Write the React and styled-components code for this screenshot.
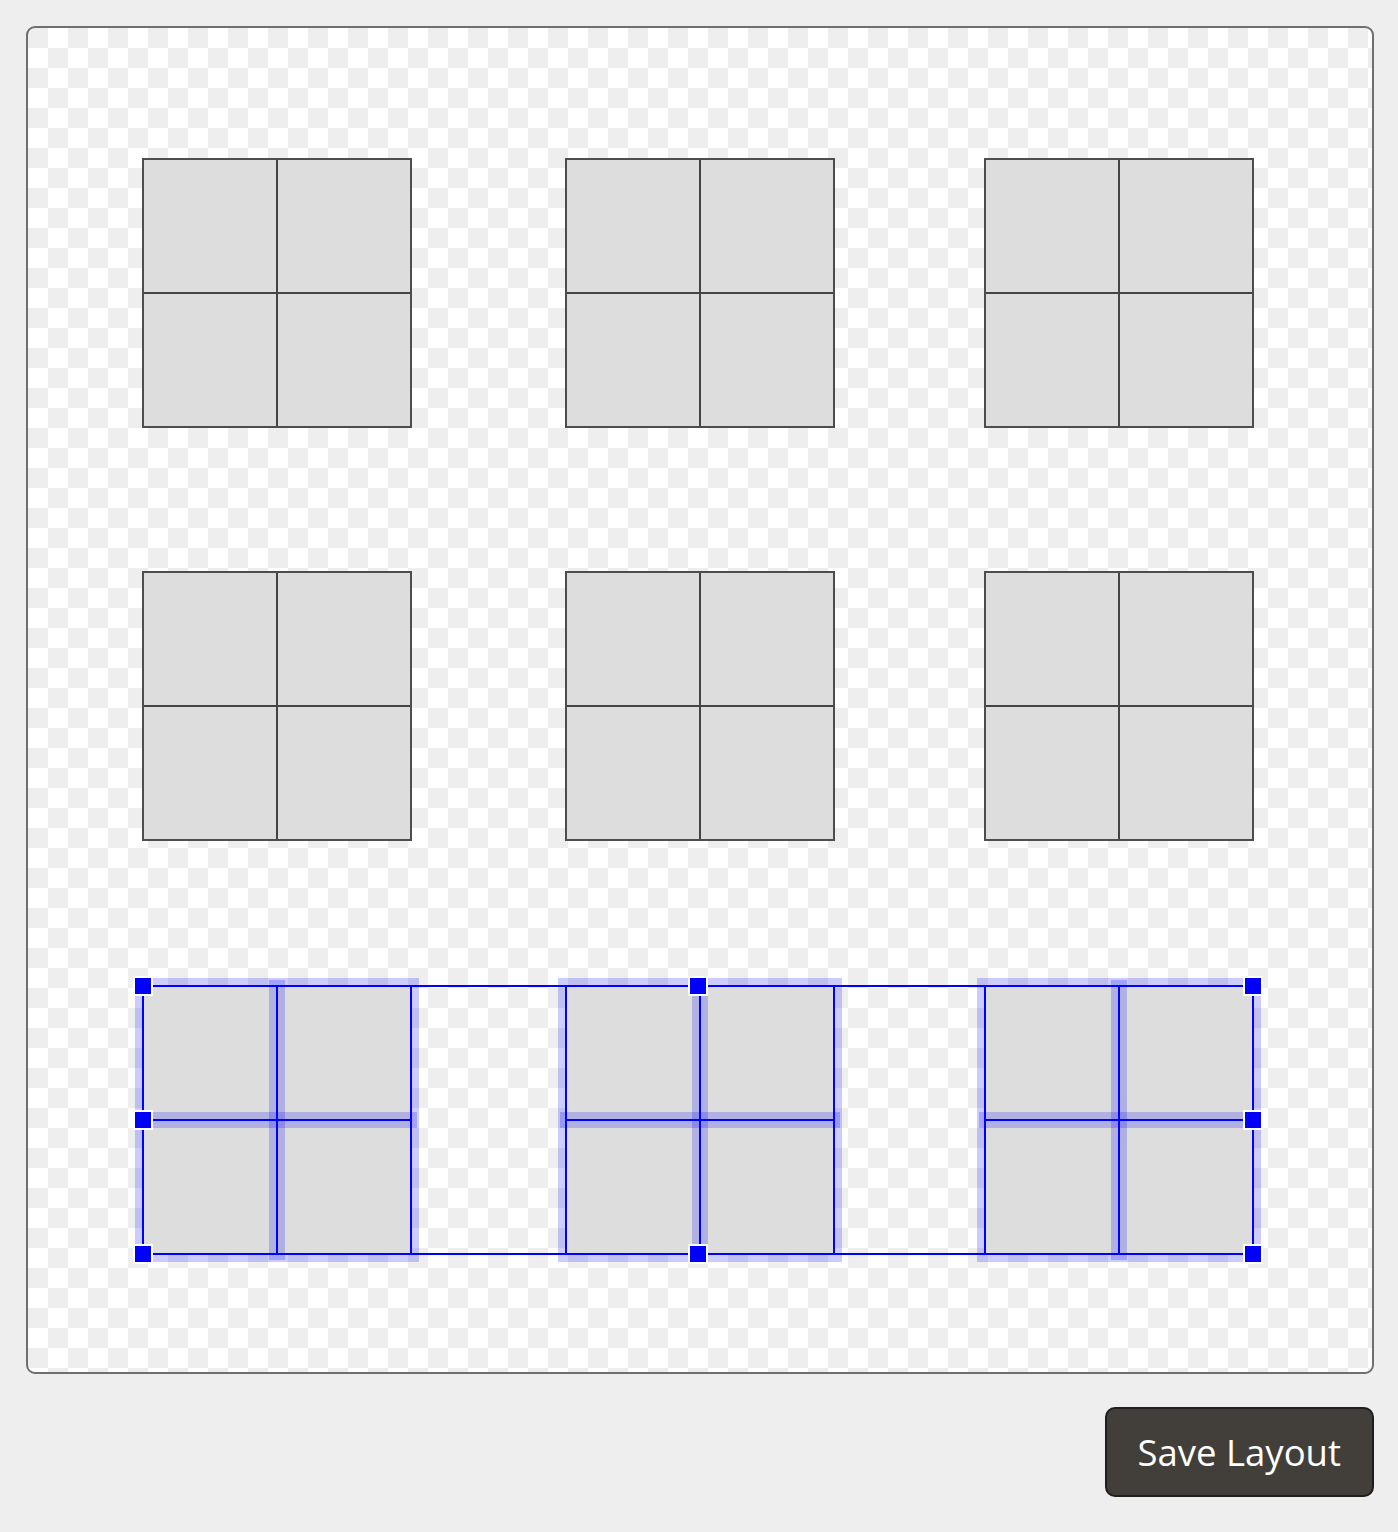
import React from 'react'
import styled, { createGlobalStyle, css } from 'styled-components'

const Global = createGlobalStyle`
  html, body { margin: 0; padding: 0; background: #eeeeee; }
  body { font-family: "Open Sans", "Noto Sans", sans-serif; }
`

const Page = styled.div`
  display: flex;
  flex-direction: column;
  align-items: flex-end;
  gap: 33px;
  padding: 26px 24px 26px 26px;
`

const Canvas = styled.div`
  position: relative;
  box-sizing: border-box;
  width: 100%;
  aspect-ratio: 1;
  border: 2px solid #6f6f6f;
  border-radius: 9px;
  overflow: hidden;
  background-color: #fff;
  background-image: conic-gradient(#fff 0 25%, #eeeeee 0 50%, #fff 0 75%, #eeeeee 0);
  background-size: 40px 40px;
`

const band = 'rgba(0, 0, 255, 0.2)'

const Item = styled.div`
  position: absolute;
  left: ${p => p.$x}px;
  top: ${p => p.$y}px;
  box-sizing: border-box;
  width: 270px;
  height: 270px;
  background: #dddddd;
  border: 2px solid ${p => (p.$selected ? '#0000ff' : '#4d4d4d')};
  ${p => p.$selected && css`box-shadow: 0 0 0 7px ${band};`}
`

const Divider = styled.div`
  position: absolute;
  background: ${p => (p.$selected ? '#0000ff' : '#444')};
  ${p => p.$vertical
    ? css`top: 0; bottom: 0; left: calc(50% - 1px); width: 2px;`
    : css`left: 0; right: 0; top: calc(50% - 1px); height: 2px;`}
  ${p => p.$selected && css`box-shadow: 0 0 0 7px ${band};`}
`

const Frame = styled.div`
  position: absolute;
  left: ${p => p.$x}px;
  top: ${p => p.$y}px;
  width: ${p => p.$w}px;
  height: ${p => p.$h}px;
  box-sizing: border-box;
  border: 2px solid #0000ff;
  pointer-events: none;
`

const Handle = styled.span`
  position: absolute;
  left: ${p => p.$left};
  top: ${p => p.$top};
  width: 16px;
  height: 16px;
  margin: -10px 0 0 -10px;
  background: #0000ff;
  border: 2px solid #fff;
`

const SaveButton = styled.button`
  height: 90px;
  padding: 0 31px;
  border: 2px solid #1e1e1e;
  border-radius: 10px;
  background: #423f3b;
  color: #fff;
  font-family: "Open Sans", "Noto Sans", sans-serif;
  font-size: 36.5px;
  cursor: pointer;
`

const cols = [114, 537, 956]
const rows = [130, 543, 957]

const items = rows.flatMap((y, r) =>
  cols.map((x, c) => ({ id: `${r}-${c}`, x, y, selected: r === 2 }))
)

// offsets keep the handle centred on the 2px frame line
const edge = v => (v === '0%' ? -1 : v === '100%' ? 1 : 0)

const handles = [
  ['0%', '0%'], ['50%', '0%'], ['100%', '0%'],
  ['0%', '50%'], ['100%', '50%'],
  ['0%', '100%'], ['50%', '100%'], ['100%', '100%'],
]

export default function App() {
  return (
    <>
      <Global />
      <Page>
        <Canvas>
          {items.map(it => (
            <Item key={it.id} $x={it.x} $y={it.y} $selected={it.selected}>
              <Divider $vertical $selected={it.selected} />
              <Divider $selected={it.selected} />
            </Item>
          ))}
          <Frame $x={114} $y={957} $w={1112} $h={270}>
            {handles.map(([l, t]) => (
              <Handle
                key={l + t}
                $left={`calc(${l} + ${edge(l)}px)`}
                $top={`calc(${t} + ${edge(t)}px)`}
              />
            ))}
          </Frame>
        </Canvas>
        <SaveButton>Save Layout</SaveButton>
      </Page>
    </>
  )
}
